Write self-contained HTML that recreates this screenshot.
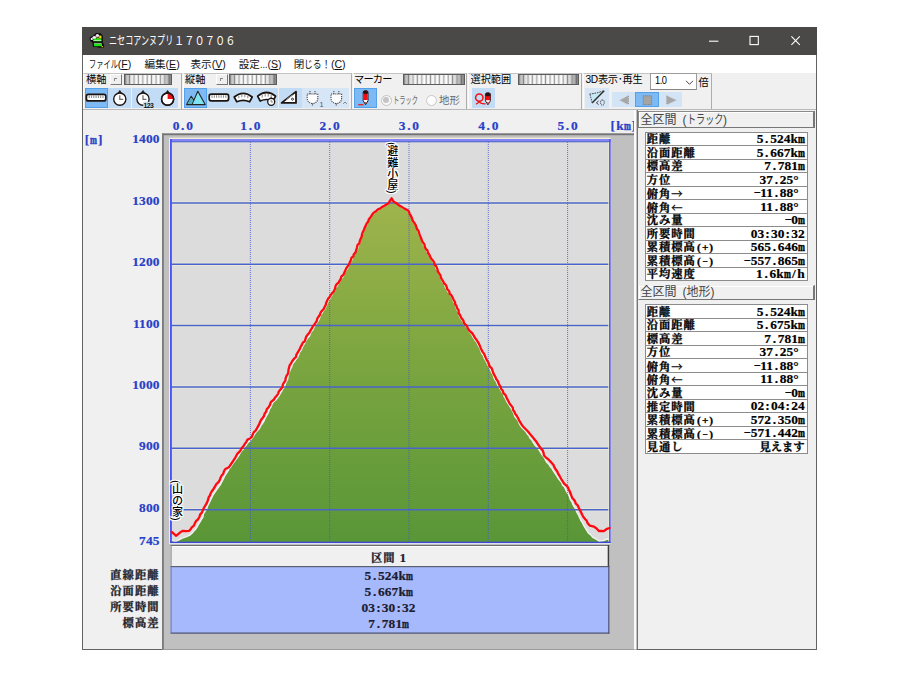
<!DOCTYPE html>
<html lang="ja"><head><meta charset="utf-8"><title>ニセコアンヌプリ１７０７０６</title>
<style>
html,body{margin:0;padding:0;background:#fff;}
body{width:900px;height:675px;overflow:hidden;position:relative;font-family:"Liberation Sans","Noto Sans CJK JP",sans-serif;}
.a{position:absolute;box-sizing:border-box;}
.t{position:absolute;white-space:nowrap;line-height:1;}
#win{left:82px;top:27px;width:735px;height:623px;background:#f0f0f0;border:1px solid #636363;}
#title{left:82px;top:27px;width:735px;height:27.7px;background:#4b4947;}
#menu{left:83px;top:54.7px;width:733px;height:18.4px;background:#fff;}
.mi{top:59px;font-size:10.6px;color:#111;}
.mi u{text-decoration:underline;text-underline-offset:1px;}
.grp{top:73px;height:36px;border-right:1px solid #adadad;border-left:1px solid #fbfbfb;border-top:1px solid #c4c4c4;}
.gl{top:75.1px;font-size:10.2px;color:#000;}
.btn{top:88px;height:20px;width:23.4px;background:#c3dcf5;}
.btn.s{background:#7db9f3;border:1px solid #55a0ea;}
.btn.d{background:#d6e6f7;}
.sl{top:73.7px;height:11.4px;border:1.3px solid #5c5c5c;background:linear-gradient(90deg,rgba(70,70,70,.4),rgba(160,160,160,.12) 14%,rgba(255,255,255,0) 30%,rgba(255,255,255,0) 76%,rgba(120,120,120,.3) 88%,rgba(60,60,60,.6)),repeating-linear-gradient(90deg,#8c8c8c 0,#ececec 1.2px,#ffffff 2.9px,#bababa 4.4px);}
.cb{top:74px;width:11.6px;height:11.4px;background:#efefef;border:1px solid #fff;border-right:1.4px solid #777;border-bottom:1.4px solid #777;}
.cb:after{content:"";position:absolute;left:2.6px;top:2.6px;width:2.6px;height:2.6px;border-left:1.2px solid #8a8a8a;border-top:1.2px solid #8a8a8a;}
.m{font-family:"Liberation Serif","Noto Serif CJK SC",serif;font-weight:bold;font-size:11.3px;letter-spacing:1px;-webkit-text-stroke:0.3px currentColor;}
.m i{font-style:normal;display:inline-block;width:6.1px;text-align:center;letter-spacing:0;}
.n{font-family:"Liberation Serif","Noto Serif CJK SC",serif;font-weight:bold;font-size:13.4px;letter-spacing:0.1px;-webkit-text-stroke:0.2px currentColor;}
.n i{font-style:normal;display:inline-block;width:6.7px;text-align:center;}
.n b{display:inline-block;width:6.7px;transform-origin:0 50%;transform:scaleX(0.62);-webkit-text-stroke:0.55px currentColor;}
.ar{font-family:"Noto Serif CJK SC",serif;}
.n s,.m s{text-decoration:none;display:inline-block;width:6.7px;text-align:center;transform:translateY(-1.3px) scaleX(1.6) scaleY(0.8);letter-spacing:0;}
.m s{width:6.1px;transform:translateY(-0.8px) scaleX(1.4) scaleY(0.8);}
.ax{color:#2840c8;}
.row{left:644.5px;width:163.5px;height:14.5px;background:#fff;border:1px solid #8c8c8c;}
.row .l{left:1.2px;top:1.7px;}
.row .v{right:2.2px;top:-0.6px;}
.row .v.m{top:1.7px;right:2.4px;letter-spacing:0;}
.hd{left:637.5px;width:177px;height:17.5px;background:#f0f0f0;border:1px solid #8a8a8a;border-right:2px solid #777;border-bottom:1px solid #777;box-shadow:inset 1px 1px 0 #fff;}
.hd .t{left:2px;top:1.8px;font-family:"Liberation Sans","Noto Sans CJK JP",sans-serif;font-size:12px;color:#454545;}
.vt{position:absolute;writing-mode:vertical-rl;font-weight:500;font-size:11.1px;line-height:1;color:#000;white-space:nowrap;
text-shadow:-1px 0 #fff,1px 0 #fff,0 -1px #fff,0 1px #fff,-1px -1px #fff,1px 1px #fff,-1px 1px #fff,1px -1px #fff;}
.bt{left:169.6px;width:438px;text-align:center;color:#1c1c30;}
.bl{width:159.5px;left:0;text-align:right;color:#202028;}
.ax{color:#2840c8;}
</style></head>
<body>
<div class="a" id="win"></div>
<div class="a" id="title"></div>
<div class="t" style="left:109px;top:34.6px;font-size:12px;color:#fff;"><span style="display:inline-block;width:64.5px;white-space:nowrap;vertical-align:top;"><span style="display:inline-block;transform-origin:0 50%;transform:scaleX(0.672);">ニセコアンヌプリ</span></span><span style="display:inline-block;width:61.6px;white-space:nowrap;vertical-align:top;"><span style="display:inline-block;transform-origin:0 50%;transform:scaleX(0.856);">１７０７０６</span></span></div>
<div class="a" id="menu"></div>
<div class="t mi" style="left:88.7px;"><span style="display:inline-block;width:29px;white-space:nowrap;vertical-align:top;"><span style="display:inline-block;transform-origin:0 50%;transform:scaleX(0.684);">ファイル</span></span>(<u>F</u>)</div>
<div class="t mi" style="left:144.4px;">編集(<u>E</u>)</div>
<div class="t mi" style="left:190.5px;">表示(<u>V</u>)</div>
<div class="t mi" style="left:238.7px;">設定<span style="display:inline-block;width:7.5px;white-space:nowrap;vertical-align:top;"><span style="display:inline-block;transform-origin:0 50%;transform:scaleX(0.848);">...</span></span>(<u>S</u>)</div>
<div class="t mi" style="left:293.8px;">閉<span style="display:inline-block;width:26.5px;white-space:nowrap;vertical-align:top;"><span style="display:inline-block;transform-origin:0 50%;transform:scaleX(0.833);">じる！</span></span>(<u>C</u>)</div>
<div class="a grp" style="left:83px;width:98.5px;"></div>
<div class="a grp" style="left:182.5px;width:169.0px;"></div>
<div class="a grp" style="left:352.5px;width:114.5px;"></div>
<div class="a grp" style="left:468px;width:114px;"></div>
<div class="a grp" style="left:583px;width:129px;"></div>
<div class="a" style="left:83px;top:109px;width:733px;height:1px;background:#b9b9b9;"></div>
<div class="t gl" style="left:86px;">横軸</div>
<div class="t gl" style="left:185px;">縦軸</div>
<div class="t gl" style="left:354px;letter-spacing:-0.8px;">マーカー</div>
<div class="t gl" style="left:470.5px;">選択範囲</div>
<div class="t gl" style="left:585.5px;letter-spacing:-0.3px;">3D表示･再生</div>
<div class="t gl" style="left:698.5px;top:77.6px;">倍</div>
<div class="a cb" style="left:110px;"></div>
<div class="a sl" style="left:124px;width:48px;"></div>
<div class="a cb" style="left:216px;"></div>
<div class="a sl" style="left:229px;width:48px;"></div>
<div class="a sl" style="left:403px;width:61.5px;"></div>
<div class="a sl" style="left:518px;width:61px;"></div>
<div class="a" style="left:650.3px;top:73.3px;width:46.7px;height:17.2px;background:#fff;border:1px solid #9c9c9c;border-bottom-color:#858585;"></div>
<div class="t" style="left:654.6px;top:75.2px;font-size:10.8px;color:#000;letter-spacing:-0.6px;transform-origin:0 50%;transform:scaleX(0.86);">1.0</div>
<div class="a btn s" style="left:84.6px;width:23.4px;"></div>
<div class="a btn " style="left:108.1px;width:23.4px;"></div>
<div class="a btn " style="left:131.5px;width:23.4px;"></div>
<div class="a btn " style="left:155px;width:23.4px;"></div>
<div class="a btn s" style="left:183.9px;width:23.4px;"></div>
<div class="a btn " style="left:207.3px;width:23.4px;"></div>
<div class="a btn " style="left:231.3px;width:23.4px;"></div>
<div class="a btn " style="left:254.8px;width:23.4px;"></div>
<div class="a btn " style="left:278.8px;width:23.4px;"></div>
<div class="a btn d" style="left:302.2px;width:23.4px;"></div>
<div class="a btn d" style="left:326px;width:23.4px;"></div>
<div class="a btn s" style="left:353.8px;width:23.4px;"></div>
<div class="a btn " style="left:472px;width:23.4px;"></div>
<div class="a btn d" style="left:585.3px;width:23.4px;"></div>
<div class="a" style="left:612px;top:92.2px;width:23.4px;height:14.6px;background:#d3e4f6;"></div>
<div class="a" style="left:635.4px;top:91.7px;width:23.4px;height:15.6px;background:#7db9f3;border:1px solid #55a0ea;"></div>
<div class="a" style="left:658.8px;top:92.2px;width:23.6px;height:14.6px;background:#d3e4f6;"></div>
<div class="a" style="left:380.5px;top:94.5px;width:11px;height:11px;border-radius:50%;border:1px solid #c4c4c4;background:#f8f8f8;"></div>
<div class="a" style="left:383px;top:97px;width:6px;height:6px;border-radius:50%;background:#c4c4c4;"></div>
<div class="a" style="left:425.5px;top:94.5px;width:11px;height:11px;border-radius:50%;border:1px solid #c8c8c8;background:#fdfdfd;"></div>
<div class="t" style="left:393.3px;top:96px;font-size:10.4px;color:#6a6a6a;"><span style="display:inline-block;width:24.5px;white-space:nowrap;vertical-align:top;"><span style="display:inline-block;transform-origin:0 50%;transform:scaleX(0.600);">トラック</span></span></div>
<div class="t" style="left:439px;top:96px;font-size:10.4px;color:#6a6a6a;">地形</div>
<div class="t n ax" style="left:152.8px;width:60px;text-align:center;top:119px;">0<i>.</i>0</div>
<div class="t n ax" style="left:220.39999999999998px;width:60px;text-align:center;top:119px;">1<i>.</i>0</div>
<div class="t n ax" style="left:299.7px;width:60px;text-align:center;top:119px;">2<i>.</i>0</div>
<div class="t n ax" style="left:379.0px;width:60px;text-align:center;top:119px;">3<i>.</i>0</div>
<div class="t n ax" style="left:458.29999999999995px;width:60px;text-align:center;top:119px;">4<i>.</i>0</div>
<div class="t n ax" style="left:537.6px;width:60px;text-align:center;top:119px;">5<i>.</i>0</div>
<div class="t n ax" style="left:609.5px;top:118.6px;"><i>[</i>k<b>m</b><i>]</i></div>
<div class="t n ax" style="left:83.6px;top:133.4px;"><i>[</i><b>m</b><i>]</i></div>
<div class="t n bl ax" style="top:132.4px;">1400</div>
<div class="t n bl ax" style="top:193.8px;">1300</div>
<div class="t n bl ax" style="top:255.1px;">1200</div>
<div class="t n bl ax" style="top:316.5px;">1100</div>
<div class="t n bl ax" style="top:377.8px;">1000</div>
<div class="t n bl ax" style="top:439.2px;">900</div>
<div class="t n bl ax" style="top:500.6px;">800</div>
<div class="t n bl ax" style="top:534.2px;">745</div>
<div class="t m bl" style="top:569.6px;">直線距離</div>
<div class="t m bl" style="top:585.6px;">沿面距離</div>
<div class="t m bl" style="top:601.6px;">所要時間</div>
<div class="t m bl" style="top:617.6px;">標高差</div>
<svg class="a" style="left:0;top:0;" width="900" height="675" viewBox="0 0 900 675">
<defs><linearGradient id="g" x1="0" y1="198" x2="0" y2="543" gradientUnits="userSpaceOnUse"><stop offset="0" stop-color="#a0b44c"/><stop offset="0.45" stop-color="#7da640"/><stop offset="1" stop-color="#599637"/></linearGradient></defs>
<rect x="162" y="133.4" width="472" height="516.2" fill="#c0c0c0"/>
<rect x="162" y="133.4" width="472" height="1.8" fill="#747474"/>
<rect x="162" y="133.4" width="1.9" height="516.2" fill="#7c7c7c"/>
<rect x="634" y="110" width="2.6" height="539.6" fill="#fbfbfb"/>
<rect x="636.6" y="110" width="1.4" height="539.6" fill="#747474"/>
<rect x="169" y="137.7" width="441.6" height="406.3" fill="#f2f0da"/>
<rect x="170" y="139" width="440.6" height="404.1" fill="#dcdcdc"/>
<rect x="171" width="439" y="201.3" height="3.2" fill="#eeecd8" opacity="0.7"/>
<rect x="171" width="439" y="262.6" height="3.2" fill="#eeecd8" opacity="0.7"/>
<rect x="171" width="439" y="324.0" height="3.2" fill="#eeecd8" opacity="0.7"/>
<rect x="171" width="439" y="385.3" height="3.2" fill="#eeecd8" opacity="0.7"/>
<rect x="171" width="439" y="446.7" height="3.2" fill="#eeecd8" opacity="0.7"/>
<rect x="171" width="439" y="508.1" height="3.2" fill="#eeecd8" opacity="0.7"/>
<polygon points="170.6,539.5 171.1,539.7 175.1,542.0 178.5,540.0 182.1,538.2 186.0,536.8 190.0,535.0 192.0,533.3 193.8,531.1 195.5,529.5 197.1,526.9 198.6,524.0 200.2,521.7 201.7,518.9 203.0,517.0 203.3,514.0 204.9,511.5 206.6,509.2 207.6,505.8 208.8,503.7 210.4,500.5 211.7,497.7 213.2,494.7 215.1,491.8 217.1,489.1 218.5,487.1 220.2,484.9 221.4,482.4 222.4,480.6 223.9,477.6 224.7,475.8 226.4,473.4 227.7,471.4 229.0,468.9 230.7,467.0 232.0,464.6 234.0,462.0 235.9,459.3 237.5,457.5 239.1,454.8 240.3,452.6 241.7,450.5 243.8,448.7 244.8,446.6 246.5,444.7 248.0,442.4 250.0,441.0 251.2,439.1 252.9,437.1 254.4,434.3 256.1,432.1 257.6,430.6 259.6,428.3 260.7,425.9 262.2,423.9 263.9,421.1 265.1,418.3 266.2,416.3 267.6,414.0 268.7,411.8 269.4,409.0 271.1,406.8 271.8,404.7 272.9,402.5 276.1,399.8 277.3,397.9 279.3,395.3 280.4,393.2 281.7,391.2 282.8,388.8 284.5,387.0 285.1,384.8 286.3,381.6 287.6,379.7 288.0,376.4 288.7,373.8 289.7,371.2 290.5,368.8 291.7,366.8 292.6,363.9 294.5,361.6 295.8,359.5 297.6,357.3 298.6,354.8 299.5,352.3 301.4,349.8 302.1,347.8 303.3,345.3 304.9,342.8 305.8,340.6 307.2,338.5 309.1,336.6 310.4,333.6 311.0,332.0 313.1,329.5 314.2,326.8 315.4,325.0 316.6,323.1 318.3,320.7 319.7,317.8 320.2,315.4 321.8,313.5 323.1,311.0 324.8,308.9 325.8,306.6 326.9,304.0 327.8,301.9 329.2,299.7 330.7,297.0 332.1,294.6 332.9,292.4 334.7,290.6 335.5,287.8 337.1,286.1 338.3,283.6 339.8,281.2 340.8,279.4 342.6,277.3 343.8,275.0 344.5,272.6 346.0,270.6 347.6,268.5 348.2,265.7 349.6,264.0 350.7,261.4 352.1,259.7 352.8,256.6 354.1,254.7 355.6,252.3 356.6,250.3 357.8,248.0 358.5,245.0 359.9,242.6 360.7,240.0 361.1,237.9 362.1,235.6 363.2,232.3 364.2,230.1 365.2,227.3 366.8,225.1 367.6,221.9 369.2,219.3 370.4,217.7 371.8,214.8 373.6,213.2 376.2,211.5 380.2,208.9 382.1,207.4 384.7,206.1 388.8,203.5 390.2,200.9 391.4,198.6 393.2,201.7 395.8,203.3 398.7,205.3 400.8,206.7 404.3,208.9 407.6,210.5 409.4,213.8 410.8,216.3 412.5,218.8 413.2,222.0 415.0,223.9 416.0,227.0 417.3,229.4 418.1,231.9 418.9,234.1 420.1,237.0 421.8,239.3 422.9,241.9 423.4,245.0 424.6,247.2 426.4,249.7 427.1,252.4 429.0,255.0 430.5,258.0 431.9,260.1 433.8,262.8 435.2,264.8 435.9,268.0 437.3,269.7 437.7,272.2 439.6,274.8 440.5,277.8 441.4,279.9 442.6,281.9 444.5,284.5 445.2,286.8 446.5,288.6 447.6,291.3 449.7,293.4 450.7,295.5 452.2,297.3 452.8,300.0 454.2,302.3 455.5,305.2 456.0,307.0 456.9,309.7 458.3,311.9 459.1,314.9 459.8,317.2 461.6,319.8 462.9,321.7 464.2,324.1 465.9,326.6 467.8,328.5 469.0,331.3 470.9,333.3 472.1,335.1 473.4,337.7 475.1,340.3 476.7,342.1 478.8,346.5 480.3,349.2 480.8,350.7 481.8,353.4 483.4,355.6 484.1,357.9 485.6,360.4 486.8,362.8 487.7,364.8 489.1,366.9 490.5,369.5 491.5,372.1 492.9,374.4 493.7,376.9 494.9,379.9 496.5,381.9 497.6,385.0 499.0,387.0 500.3,389.1 501.9,391.8 503.3,393.7 504.2,396.6 505.8,399.1 506.4,400.8 507.8,403.1 509.4,405.7 511.2,408.3 512.5,410.6 513.8,413.2 514.6,416.0 516.2,418.3 518.0,420.2 519.0,423.0 520.1,425.0 521.7,427.4 523.6,429.3 526.1,431.8 527.3,434.0 529.1,435.8 529.9,438.1 532.0,440.1 533.1,442.3 534.7,444.7 537.3,447.5 539.4,450.2 540.6,452.4 542.5,455.3 544.3,457.5 545.7,460.4 547.0,462.6 548.8,464.2 550.3,466.7 552.0,468.3 553.4,470.9 555.0,473.3 557.1,476.4 558.3,478.5 559.8,480.4 561.7,482.5 562.6,485.3 564.6,487.1 565.7,489.7 566.9,492.1 568.1,493.8 569.3,496.5 570.2,499.3 572.2,502.4 573.1,504.9 574.8,507.5 576.0,510.1 577.1,512.6 578.7,515.4 579.9,518.1 580.7,520.1 582.5,522.9 583.4,524.8 584.7,527.1 586.9,530.5 588.1,532.7 590.4,534.6 592.8,537.4 596.3,539.2 599.1,541.3 603.8,540.5 607.0,539.0 609.6,539.3 609.6,543.3 170.6,543.3" fill="url(#g)" stroke="#f2f2f2" stroke-width="1.4" stroke-linejoin="round"/>
<line x1="171" x2="610" y1="202.9" y2="202.9" stroke="#4a64cc" stroke-width="1.5"/>
<line x1="171" x2="610" y1="264.2" y2="264.2" stroke="#4a64cc" stroke-width="1.5"/>
<line x1="171" x2="610" y1="325.6" y2="325.6" stroke="#4a64cc" stroke-width="1.5"/>
<line x1="171" x2="610" y1="386.9" y2="386.9" stroke="#4a64cc" stroke-width="1.5"/>
<line x1="171" x2="610" y1="448.3" y2="448.3" stroke="#4a64cc" stroke-width="1.5"/>
<line x1="171" x2="610" y1="509.7" y2="509.7" stroke="#4a64cc" stroke-width="1.5"/>
<line y1="140" y2="543" x1="250.4" x2="250.4" stroke="#4458d0" stroke-width="1" stroke-dasharray="1 1" opacity="0.8"/>
<line y1="140" y2="543" x1="329.7" x2="329.7" stroke="#4458d0" stroke-width="1" stroke-dasharray="1 1" opacity="0.8"/>
<line y1="140" y2="543" x1="409.0" x2="409.0" stroke="#4458d0" stroke-width="1" stroke-dasharray="1 1" opacity="0.8"/>
<line y1="140" y2="543" x1="488.3" x2="488.3" stroke="#4458d0" stroke-width="1" stroke-dasharray="1 1" opacity="0.8"/>
<line y1="140" y2="543" x1="567.6" x2="567.6" stroke="#4458d0" stroke-width="1" stroke-dasharray="1 1" opacity="0.8"/>
<rect x="170" y="139" width="440.6" height="2.1" fill="#8484f6"/>
<rect x="170" y="141" width="440.6" height="1.3" fill="#5c70d2"/>
<rect x="170" y="139" width="1.9" height="404" fill="#4c54f6"/>
<rect x="608.3" y="142.3" width="0.9" height="399.4" fill="#ecead2"/>
<rect x="609.1" y="139" width="1.5" height="404" fill="#4c54f0"/>
<rect x="170" y="541.7" width="440.6" height="1.4" fill="#3c48d8"/>
<polyline points="171.6,531.9 173.6,533.5 175.9,535.8 179.0,533.5 181.1,531.7 182.9,530.8 186.0,531.2 189.2,530.8 190.8,528.9 191.8,527.3 193.9,525.6 194.8,523.4 196.2,520.8 197.9,519.5 199.4,517.0 200.2,514.3 201.9,512.7 203.0,509.8 204.1,507.5 206.0,504.4 207.2,502.1 208.1,499.7 208.7,497.1 209.8,495.7 210.7,493.3 212.0,491.0 213.7,488.7 215.2,486.2 216.2,484.2 218.3,482.4 219.7,480.1 220.4,478.0 221.7,475.5 223.3,473.7 223.9,471.3 225.3,469.0 228.5,467.5 229.9,465.9 231.6,463.2 233.2,461.0 234.0,459.6 235.5,457.3 236.4,455.4 237.5,453.7 239.6,451.7 241.0,449.6 241.8,447.9 243.6,445.9 245.0,443.7 246.5,441.6 247.5,439.6 250.0,438.5 251.8,436.8 252.8,434.4 253.7,432.3 255.8,430.4 257.4,427.5 258.4,425.6 259.4,423.9 260.1,421.7 261.4,419.4 262.4,418.2 264.0,416.0 264.7,413.4 266.1,411.8 266.9,409.0 268.6,407.2 270.0,404.9 270.8,402.2 274.0,399.5 275.0,397.6 276.3,396.3 278.2,393.6 278.6,391.9 279.8,390.3 281.5,388.3 282.6,386.7 282.8,384.5 284.0,382.6 285.4,380.6 285.6,378.4 286.6,375.7 287.6,374.4 288.3,372.3 288.5,369.8 289.0,367.9 289.7,365.2 290.9,363.6 292.3,361.0 294.1,358.7 296.0,357.0 296.4,354.6 297.5,352.8 298.4,351.4 300.0,348.6 300.6,346.8 301.8,345.0 302.9,342.6 304.7,341.5 305.5,338.9 306.3,336.4 307.8,334.6 309.6,332.4 310.0,331.3 311.8,328.4 313.0,326.2 314.2,324.7 315.3,323.2 316.8,320.9 317.3,318.6 318.3,317.0 319.8,315.0 320.7,312.4 322.0,310.7 323.5,309.2 324.6,307.0 325.7,305.0 326.2,302.7 327.4,300.2 328.2,298.5 329.8,296.7 330.7,294.9 332.7,292.6 333.9,291.1 335.1,288.4 335.5,286.2 336.7,284.2 338.3,282.9 339.8,280.4 340.8,278.8 341.3,276.6 343.5,274.7 344.5,272.3 345.4,270.3 346.1,268.6 347.4,266.6 349.2,264.1 349.6,262.7 351.0,259.8 351.5,257.7 353.4,256.4 353.7,254.4 355.6,252.2 356.2,250.0 356.9,247.8 357.5,245.0 359.3,243.4 359.7,241.5 360.5,239.2 361.8,236.2 362.0,234.1 362.8,232.1 364.0,229.8 364.7,227.6 365.6,225.9 366.8,223.3 368.1,221.6 369.0,219.0 370.4,217.4 371.9,215.0 373.4,212.9 376.0,211.2 378.0,209.4 380.0,208.6 382.2,206.9 384.5,205.8 386.0,204.8 388.6,203.2 390.0,200.6 391.6,198.3 393.4,201.4 396.0,203.0 398.1,204.7 401.0,206.4 404.5,208.6 407.8,210.2 409.1,212.2 409.7,214.1 411.0,216.0 412.1,218.5 412.6,220.3 413.8,222.2 415.5,224.6 416.2,226.7 417.2,229.2 418.6,231.1 419.2,233.4 420.1,235.9 421.0,238.0 422.0,240.7 423.2,242.8 424.4,244.4 424.9,246.9 426.1,249.3 427.5,250.4 427.9,252.7 429.4,254.7 430.1,256.4 431.3,258.8 433.3,261.0 434.2,262.5 434.8,264.9 436.3,266.4 437.5,269.4 437.8,271.5 439.0,273.2 440.6,275.7 440.7,277.4 442.0,279.6 443.2,281.4 444.0,283.3 445.8,284.9 446.8,287.3 447.3,289.2 449.2,291.3 449.7,293.8 451.4,295.2 452.9,298.0 453.4,299.5 455.0,302.0 455.3,304.4 456.4,305.8 457.4,308.8 458.6,310.2 458.7,313.1 460.0,315.0 460.7,316.9 461.5,318.3 463.4,320.6 463.9,323.0 465.8,324.8 466.9,326.3 468.1,328.9 469.8,331.2 472.0,333.0 473.4,335.0 475.0,337.9 476.1,339.2 477.8,341.8 478.9,343.7 480.0,346.2 480.6,347.9 481.5,349.9 482.8,352.1 484.3,354.1 485.0,356.0 485.8,357.9 486.7,359.9 488.3,362.5 489.0,364.5 489.7,366.5 491.6,368.1 492.5,370.5 493.2,372.9 494.1,374.6 495.5,377.1 496.1,379.0 497.6,380.8 498.3,382.5 499.0,384.3 500.5,386.7 501.2,389.0 502.6,390.5 503.6,393.3 505.6,395.2 506.1,396.8 507.3,399.1 508.4,401.2 509.7,403.8 511.1,405.4 512.8,407.6 513.1,410.1 514.3,411.5 515.2,413.7 516.8,415.9 518.0,418.0 519.1,420.3 520.3,422.3 521.7,424.7 523.6,427.1 525.3,428.8 528.0,431.5 529.4,433.2 531.3,435.6 533.2,437.7 534.5,439.6 536.3,441.6 538.1,444.4 539.3,446.1 541.0,448.6 542.7,450.4 543.6,453.1 544.0,455.5 545.7,457.3 548.0,459.0 549.5,460.5 551.8,463.1 553.6,465.1 554.3,467.2 555.8,469.5 557.3,471.5 558.1,473.6 559.4,475.5 560.0,476.8 561.4,479.3 562.6,481.1 564.1,483.6 566.2,485.3 567.7,487.1 568.8,489.5 569.6,491.0 570.8,494.0 571.5,495.9 572.4,498.1 573.8,499.5 575.2,501.6 575.7,503.5 577.7,505.3 578.7,507.5 580.1,510.4 581.0,512.1 582.2,514.8 583.4,517.0 585.3,519.3 586.7,520.8 587.7,523.2 589.7,525.6 592.1,526.2 594.0,526.7 596.0,528.0 599.1,531.1 601.0,530.8 603.8,531.1 607.0,528.8 609.6,528.0" fill="none" stroke="#ff0810" stroke-width="2.3" stroke-linejoin="round" stroke-linecap="round"/>
<rect x="170.6" y="545.6" width="438.6" height="21" fill="#f0f0f0"/>
<rect x="170.6" y="545" width="438.6" height="1" fill="#6c6c6c"/>
<rect x="171.6" y="546" width="436.4" height="1" fill="#fdfdfd"/>
<rect x="170.6" y="545.6" width="1" height="21" fill="#8a8a8a"/>
<rect x="607.7" y="545" width="1.5" height="21.6" fill="#3c3c3c"/>
<rect x="170.6" y="566.3" width="438.8" height="67" fill="#a7b9fd"/>
<rect x="170.6" y="566" width="438.8" height="1.2" fill="#5c5f6c"/>
<rect x="170.6" y="632.5" width="438.8" height="1.2" fill="#4c5070"/>
<rect x="170.6" y="566" width="1" height="67" fill="#7078b0"/>
<rect x="608.2" y="566" width="1.2" height="67.6" fill="#4c5276"/>
</svg>
<div class="vt" style="left:385.6px;top:141.6px;">(避難小屋)</div>
<div class="vt" style="left:170.4px;top:480px;">(山の家)</div>
<div class="t m bt" style="top:551px;">区間 <span class="n" style="vertical-align:-0.5px;">1</span></div>
<div class="t n bt" style="top:569px;">5<i>.</i>524k<b>m</b></div>
<div class="t n bt" style="top:585px;">5<i>.</i>667k<b>m</b></div>
<div class="t n bt" style="top:601px;">03<i>:</i>30<i>:</i>32</div>
<div class="t n bt" style="top:617px;">7<i>.</i>781<b>m</b></div>
<div class="a hd" style="top:110.8px;"><div class="t">全区間<span style="display:inline-block;width:6px;"> </span>(<span style="display:inline-block;width:36.5px;white-space:nowrap;vertical-align:top;"><span style="display:inline-block;transform-origin:0 50%;transform:scaleX(0.760);">トラック</span></span>)</div></div>
<div class="a hd" style="top:284.6px;height:15.5px;border-top-color:#f0f0f0;border-left-color:#f0f0f0;"><div class="t" style="top:0.6px;">全区間<span style="display:inline-block;width:6px;"> </span>(地形)</div></div>
<div class="a row" style="top:131.60px;"><div class="t m l">距離</div><div class="t n v" style="">5<i>.</i>524k<b>m</b></div></div>
<div class="a row" style="top:145.12px;"><div class="t m l">沿面距離</div><div class="t n v" style="">5<i>.</i>667k<b>m</b></div></div>
<div class="a row" style="top:158.64px;"><div class="t m l">標高差</div><div class="t n v" style="">7<i>.</i>781<b>m</b></div></div>
<div class="a row" style="top:172.16px;"><div class="t m l">方位</div><div class="t n v" style="padding-right:6px;">37<i>.</i>25°</div></div>
<div class="a row" style="top:185.68px;"><div class="t m l">俯角<span class="ar">→</span></div><div class="t n v" style="padding-right:6px;"><s>-</s>11<i>.</i>88°</div></div>
<div class="a row" style="top:199.20px;"><div class="t m l">俯角<span class="ar">←</span></div><div class="t n v" style="padding-right:6px;">11<i>.</i>88°</div></div>
<div class="a row" style="top:212.72px;"><div class="t m l">沈み量</div><div class="t n v" style=""><s>-</s>0<b>m</b></div></div>
<div class="a row" style="top:226.24px;"><div class="t m l">所要時間</div><div class="t n v" style="">03<i>:</i>30<i>:</i>32</div></div>
<div class="a row" style="top:239.76px;"><div class="t m l">累積標高<i>(</i><i>+</i><i>)</i></div><div class="t n v" style="">565<i>.</i>646<b>m</b></div></div>
<div class="a row" style="top:253.28px;"><div class="t m l">累積標高<i>(</i><s>-</s><i>)</i></div><div class="t n v" style=""><s>-</s>557<i>.</i>865<b>m</b></div></div>
<div class="a row" style="top:266.80px;"><div class="t m l">平均速度</div><div class="t n v" style="">1<i>.</i>6k<b>m</b><i>/</i>h</div></div>
<div class="a row" style="top:304.20px;"><div class="t m l">距離</div><div class="t n v" style="">5<i>.</i>524k<b>m</b></div></div>
<div class="a row" style="top:317.72px;"><div class="t m l">沿面距離</div><div class="t n v" style="">5<i>.</i>675k<b>m</b></div></div>
<div class="a row" style="top:331.24px;"><div class="t m l">標高差</div><div class="t n v" style="">7<i>.</i>781<b>m</b></div></div>
<div class="a row" style="top:344.76px;"><div class="t m l">方位</div><div class="t n v" style="padding-right:6px;">37<i>.</i>25°</div></div>
<div class="a row" style="top:358.28px;"><div class="t m l">俯角<span class="ar">→</span></div><div class="t n v" style="padding-right:6px;"><s>-</s>11<i>.</i>88°</div></div>
<div class="a row" style="top:371.80px;"><div class="t m l">俯角<span class="ar">←</span></div><div class="t n v" style="padding-right:6px;">11<i>.</i>88°</div></div>
<div class="a row" style="top:385.32px;"><div class="t m l">沈み量</div><div class="t n v" style=""><s>-</s>0<b>m</b></div></div>
<div class="a row" style="top:398.84px;"><div class="t m l">推定時間</div><div class="t n v" style="">02<i>:</i>04<i>:</i>24</div></div>
<div class="a row" style="top:412.36px;"><div class="t m l">累積標高<i>(</i><i>+</i><i>)</i></div><div class="t n v" style="">572<i>.</i>350<b>m</b></div></div>
<div class="a row" style="top:425.88px;"><div class="t m l">累積標高<i>(</i><s>-</s><i>)</i></div><div class="t n v" style=""><s>-</s>571<i>.</i>442<b>m</b></div></div>
<div class="a row" style="top:439.40px;"><div class="t m l">見通し</div><div class="t m v" style="">見えます</div></div>
<svg class="a" style="left:0;top:0;" width="900" height="675" viewBox="0 0 900 675">
<g><path d="M93 36.2L96.2 33.4L100.8 33.8L102.4 36V42.8L103.6 44.4V47.2H98.4L96.6 46.6H93.4L92.8 42.2L90.2 40.6V37.4z" fill="#0a0808" stroke="#0a0808" stroke-width="0.8" stroke-linejoin="round"/><ellipse cx="94.4" cy="37.4" rx="2" ry="1.5" fill="#f4f0f4"/><ellipse cx="97.4" cy="35.6" rx="1.7" ry="1.5" fill="#ece8ec"/><ellipse cx="91.8" cy="38.9" rx="1.1" ry="1.2" fill="#e8e4e8"/><rect x="99.2" y="35.6" width="2.2" height="3" fill="#f4e800"/><rect x="96.6" y="37.6" width="2.6" height="1.2" fill="#c8d800"/><rect x="93.4" y="38.7" width="8" height="2.6" fill="#18e810"/><rect x="93.4" y="40.2" width="8" height="0.7" fill="#d8f8d8"/><rect x="93.8" y="42.9" width="7.8" height="0.8" fill="#f0e0f0"/><rect x="94" y="43.7" width="8" height="2.5" fill="#18e810"/><rect x="101.6" y="46" width="1.4" height="1.2" fill="#d8c800"/></g>
<path d="M709 41.2h9.4" stroke="#fff" stroke-width="1.1"/>
<rect x="750" y="36.4" width="8.3" height="8.2" fill="none" stroke="#fff" stroke-width="1.1"/>
<path d="M791.4 36.4l8.4 8.4M799.8 36.4l-8.4 8.4" stroke="#fff" stroke-width="1.1"/>
<path d="M686 80.8l3.5 3.5 3.5-3.5" fill="none" stroke="#444" stroke-width="1"/>
<rect x="86.4" y="94.3" width="19.4" height="6.6" rx="2" fill="#fff" stroke="#1c1410" stroke-width="1.7"/><line x1="89.2" x2="89.2" y1="95.3" y2="97.89999999999999" stroke="#8e8e8e" stroke-width="1.1"/><line x1="91.5" x2="91.5" y1="95.3" y2="97.89999999999999" stroke="#8e8e8e" stroke-width="1.1"/><line x1="93.8" x2="93.8" y1="95.3" y2="97.89999999999999" stroke="#8e8e8e" stroke-width="1.1"/><line x1="96.1" x2="96.1" y1="95.3" y2="97.89999999999999" stroke="#8e8e8e" stroke-width="1.1"/><line x1="98.4" x2="98.4" y1="95.3" y2="97.89999999999999" stroke="#8e8e8e" stroke-width="1.1"/><line x1="100.7" x2="100.7" y1="95.3" y2="97.89999999999999" stroke="#8e8e8e" stroke-width="1.1"/><line x1="103.0" x2="103.0" y1="95.3" y2="97.89999999999999" stroke="#8e8e8e" stroke-width="1.1"/>
<rect x="209.2" y="94.2" width="19.4" height="6.6" rx="2" fill="#fff" stroke="#1c1410" stroke-width="1.7"/><line x1="212.0" x2="212.0" y1="95.2" y2="97.8" stroke="#8e8e8e" stroke-width="1.1"/><line x1="214.3" x2="214.3" y1="95.2" y2="97.8" stroke="#8e8e8e" stroke-width="1.1"/><line x1="216.6" x2="216.6" y1="95.2" y2="97.8" stroke="#8e8e8e" stroke-width="1.1"/><line x1="218.9" x2="218.9" y1="95.2" y2="97.8" stroke="#8e8e8e" stroke-width="1.1"/><line x1="221.2" x2="221.2" y1="95.2" y2="97.8" stroke="#8e8e8e" stroke-width="1.1"/><line x1="223.5" x2="223.5" y1="95.2" y2="97.8" stroke="#8e8e8e" stroke-width="1.1"/><line x1="225.8" x2="225.8" y1="95.2" y2="97.8" stroke="#8e8e8e" stroke-width="1.1"/>
<circle cx="119.8" cy="99.1" r="6.1" fill="#fff" stroke="#1c1410" stroke-width="1.35"/><path d="M118.3 92.69999999999999L119.8 90.5L121.3 92.69999999999999z" fill="#1c1410" stroke="#1c1410" stroke-width="0.8" stroke-linejoin="round"/><path d="M119.8 95.3V99.39999999999999H123.2" fill="none" stroke="#6e6e6e" stroke-width="1.2"/>
<circle cx="143" cy="99.1" r="6.1" fill="#fff" stroke="#1c1410" stroke-width="1.35"/><path d="M141.5 92.69999999999999L143 90.5L144.5 92.69999999999999z" fill="#1c1410" stroke="#1c1410" stroke-width="0.8" stroke-linejoin="round"/><path d="M143 95.3V99.39999999999999H146.4" fill="none" stroke="#6e6e6e" stroke-width="1.2"/>
<rect x="143.2" y="101.8" width="11.4" height="6" fill="#c3dcf5"/>
<text x="143.4" y="107.6" font-family="Liberation Sans,sans-serif" font-weight="bold" font-size="6.8" letter-spacing="-0.5" fill="#111">123</text>
<circle cx="167.6" cy="99.1" r="6.1" fill="#fff" stroke="#1c1410" stroke-width="1.35"/><path d="M166.1 92.69999999999999L167.6 90.5L169.1 92.69999999999999z" fill="#1c1410" stroke="#1c1410" stroke-width="0.8" stroke-linejoin="round"/><path d="M167.6 99.1V93.0A6.1 6.1 0 0 1 173.7 99.1z" fill="#f01010"/><circle cx="167.6" cy="99.1" r="6.1" fill="none" stroke="#1c1410" stroke-width="1.5"/>
<path d="M186.6 104.6L191.2 96.3L193.8 100.4L197.8 91.3L205.2 104.6z" fill="#80e4f2" stroke="#242424" stroke-width="1.1" stroke-linejoin="round"/>
<path d="M187.6 104L191.2 97.4L193.6 101.2L192.4 104z" fill="#56afc0"/>
<path d="M193.8 100.4L192.2 104.4" stroke="#242424" stroke-width="0.9"/>
<path d="M234.20000000000002 97.0Q243.20000000000002 89.60000000000001 252.20000000000002 97.0L249.60000000000002 101.80000000000001Q243.20000000000002 98.80000000000001 236.8 101.80000000000001z" fill="#fff" stroke="#1c1410" stroke-width="1.7" stroke-linejoin="round"/><path d="M238.8 95.60000000000001v2.6M241.8 94.60000000000001v2.6M244.8 94.60000000000001v2.6M247.8 95.60000000000001v2.6" stroke="#8e8e8e" stroke-width="1.1"/>
<path d="M257.59999999999997 96.19999999999999Q266.59999999999997 88.8 275.59999999999997 96.19999999999999L273.0 101.0Q266.59999999999997 98.0 260.2 101.0z" fill="#fff" stroke="#1c1410" stroke-width="1.7" stroke-linejoin="round"/><path d="M262.2 94.8v2.6M265.2 93.8v2.6M268.2 93.8v2.6M271.2 94.8v2.6" stroke="#8e8e8e" stroke-width="1.1"/>
<circle cx="271.2" cy="101.8" r="3.5" fill="#fff" stroke="#1c1410" stroke-width="1.3"/><path d="M270.2 98.2h2" stroke="#1c1410" stroke-width="1.4"/><path d="M271.2 99.8v2.2h1.8" fill="none" stroke="#777" stroke-width="0.9"/>
<path d="M281.6 102.9H296V91.6z" fill="#fff" stroke="#1c1410" stroke-width="1.8" stroke-linejoin="round"/><circle cx="292.5" cy="99.2" r="1" fill="#fff" stroke="#1c1410" stroke-width="0.9"/><path d="M286.5 99.5l6-4.6" stroke="#b0b0b0" stroke-width="0.8"/>
<path d="M307.2 94h10.6v4.2q0 4.6-5.3 5.4q-5.3-0.8-5.3-5.4z" fill="#fdfdfd" stroke="#4a4a4a" stroke-width="1.1" stroke-dasharray="1.2 0.9"/><path d="M310.0 94v-3M315.0 94v-3M312.5 103.6v2.4" stroke="#5a5a5a" stroke-width="1.2" stroke-dasharray="1.2 0.7"/>
<text x="319.4" y="107.2" font-family="Liberation Sans,sans-serif" font-size="7.4" fill="#555">1</text>
<path d="M331 94h10.6v4.2q0 4.6-5.3 5.4q-5.3-0.8-5.3-5.4z" fill="#fdfdfd" stroke="#4a4a4a" stroke-width="1.1" stroke-dasharray="1.2 0.9"/><path d="M333.8 94v-3M338.8 94v-3M336.3 103.6v2.4" stroke="#5a5a5a" stroke-width="1.2" stroke-dasharray="1.2 0.7"/>
<path d="M343.2 103.8l1.8-1.8 1.8 1.8" fill="none" stroke="#777" stroke-width="0.9"/>
<path d="M363.2 92.1q0-1.5 2.4-1.5q2.4 0 2.4 1.5v8.6l-2.4 4l-2.4-4z" fill="#fff" stroke="#200808" stroke-width="0.9"/><path d="M363.5 92.1q0-1.2 2.1-1.2q2.1 0 2.1 1.2v8.0h-4.2z" fill="#f40c10"/><path d="M363.2 92.1q0-1.5 2.4-1.5q2.4 0 2.4 1.5v1.2l-2.4 1l-2.4-1z" fill="#2a1010"/><path d="M364.59999999999997 102.19999999999999h2l-1 2.2z" fill="#f40c10"/>
<path d="M358.2 104.7h5.4" stroke="#f01818" stroke-width="1.2"/>
<circle cx="479.3" cy="97.6" r="3.7" fill="none" stroke="#f41010" stroke-width="1.5"/><path d="M476.4 103.9q1.2-0.2 2.6-2.4q1.6 2.6 6.2 2.3" fill="none" stroke="#f41010" stroke-width="1.3" stroke-linecap="round"/>
<path d="M485.4 94.2q0-1.5 2.5-1.5q2.5 0 2.5 1.5v6.6l-2.5 4l-2.5-4z" fill="#fff" stroke="#200808" stroke-width="0.9"/><path d="M485.7 94.2q0-1.2 2.2-1.2q2.2 0 2.2 1.2v6.0h-4.4z" fill="#f40c10"/><path d="M485.4 94.2q0-1.5 2.5-1.5q2.5 0 2.5 1.5v1.2l-2.5 1l-2.5-1z" fill="#2a1010"/><path d="M486.9 102.3h2l-1 2.2z" fill="#f40c10"/>
<path d="M590 94L604 91L592.4 102.8z" fill="#bfeaf2" opacity="0.7"/><path d="M604.2 90.8L592 103" stroke="#2a2a2a" stroke-width="1.4"/><path d="M589.6 94q7-0.6 14-3.2" fill="none" stroke="#3a3a3a" stroke-width="1" stroke-dasharray="1.6 0.9"/><path d="M590 94.4l2.2 8.4" stroke="#444" stroke-width="1" stroke-dasharray="1.4 1"/><path d="M598.6 101l-2.2 1.8l2.2 1.8" fill="none" stroke="#333" stroke-width="0.9"/><rect x="600.6" y="100" width="3.6" height="5" rx="1.4" fill="none" stroke="#333" stroke-width="0.9" stroke-dasharray="1.2 0.7"/>
<path d="M628 95.8v8.8l-8.4-4.4z" fill="#a6a6a6" stroke="#c4c4c4" stroke-width="0.9" stroke-dasharray="1 0.8"/><path d="M628.4 95.8v8.8" stroke="#8a8a8a" stroke-width="1" stroke-dasharray="1 0.8"/>
<rect x="643.2" y="95.8" width="8.4" height="8.8" fill="#a4a4a4" stroke="#7a7a7a" stroke-width="0.9" stroke-dasharray="1 0.8"/>
<path d="M667 95.8v8.8l9.4-4.4z" fill="#a6a6a6" stroke="#c4c4c4" stroke-width="0.9" stroke-dasharray="1 0.8"/><path d="M666.8 95.8v8.8" stroke="#8a8a8a" stroke-width="1" stroke-dasharray="1 0.8"/>
</svg>
</body></html>
